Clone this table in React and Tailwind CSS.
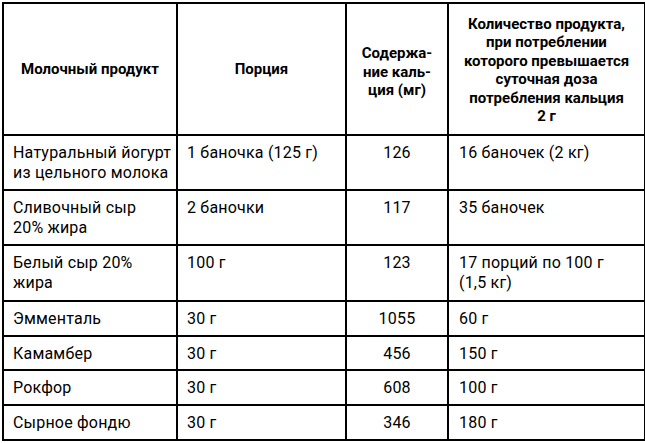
import React from 'react';

const rows = [
  { name: ['Натуральный йогурт', 'из цельного молока'], portion: '1 баночка (125 г)', ca: '126', qty: ['16 баночек (2 кг)'], h: 'h-[55px]' },
  { name: ['Сливочный сыр', '20% жира'], portion: '2 баночки', ca: '117', qty: ['35 баночек'], h: 'h-[55px]' },
  { name: ['Белый сыр 20%', 'жира'], portion: '100 г', ca: '123', qty: ['17 порций по 100 г', '(1,5 кг)'], h: 'h-[56px]' },
  { name: ['Эмменталь'], portion: '30 г', ca: '1055', qty: ['60 г'], h: 'h-[35px]' },
  { name: ['Камамбер'], portion: '30 г', ca: '456', qty: ['150 г'], h: 'h-[34px]' },
  { name: ['Рокфор'], portion: '30 г', ca: '608', qty: ['100 г'], h: 'h-[35px]' },
  { name: ['Сырное фондю'], portion: '30 г', ca: '346', qty: ['180 г'], h: 'h-[35px]' },
];

export default function App() {
  return (
    <div className="w-[645px] h-[443px] bg-white pl-[2px] pt-[2px] text-black font-['Roboto','Liberation_Sans',sans-serif]">
      <table className="border-collapse border-2 border-black table-fixed w-[642px]">
        <colgroup>
          <col className="w-[174px]" />
          <col className="w-[169px]" />
          <col className="w-[102px]" />
          <col className="w-[197px]" />
        </colgroup>
        <thead>
          <tr className="h-[132px] font-bold text-[15px] leading-[18.5px] whitespace-nowrap">
            <th className="border-2 border-black align-middle text-center p-0">Молочный продукт</th>
            <th className="border-2 border-black align-middle text-center p-0">Порция</th>
            <th className="border-2 border-black align-middle text-center p-0 pt-[6px]">
              Содержа-<br />ние каль-<br />ция (мг)
            </th>
            <th className="border-2 border-black align-middle text-center p-0 pt-[2px]">
              Количество продукта,<br />при потреблении<br />которого превышается<br />суточная доза<br />потребления кальция<br />2 г
            </th>
          </tr>
        </thead>
        <tbody className="text-[16px] leading-[20px] tracking-[0.2px] whitespace-nowrap">
          {rows.map((r, i) => (
            <tr key={i} className={r.h}>
              <td className="border-2 border-black align-top pl-[9px] pt-[7px] pb-0">
                {r.name.map((l, j) => <div key={j}>{l}</div>)}
              </td>
              <td className="border-2 border-black align-top pl-[9px] pt-[7px] pb-0">{r.portion}</td>
              <td className="border-2 border-black align-top text-center pt-[7px] pb-0">{r.ca}</td>
              <td className="border-2 border-black align-top pl-[10px] pt-[7px] pb-0">
                {r.qty.map((l, j) => <div key={j}>{l}</div>)}
              </td>
            </tr>
          ))}
        </tbody>
      </table>
    </div>
  );
}
